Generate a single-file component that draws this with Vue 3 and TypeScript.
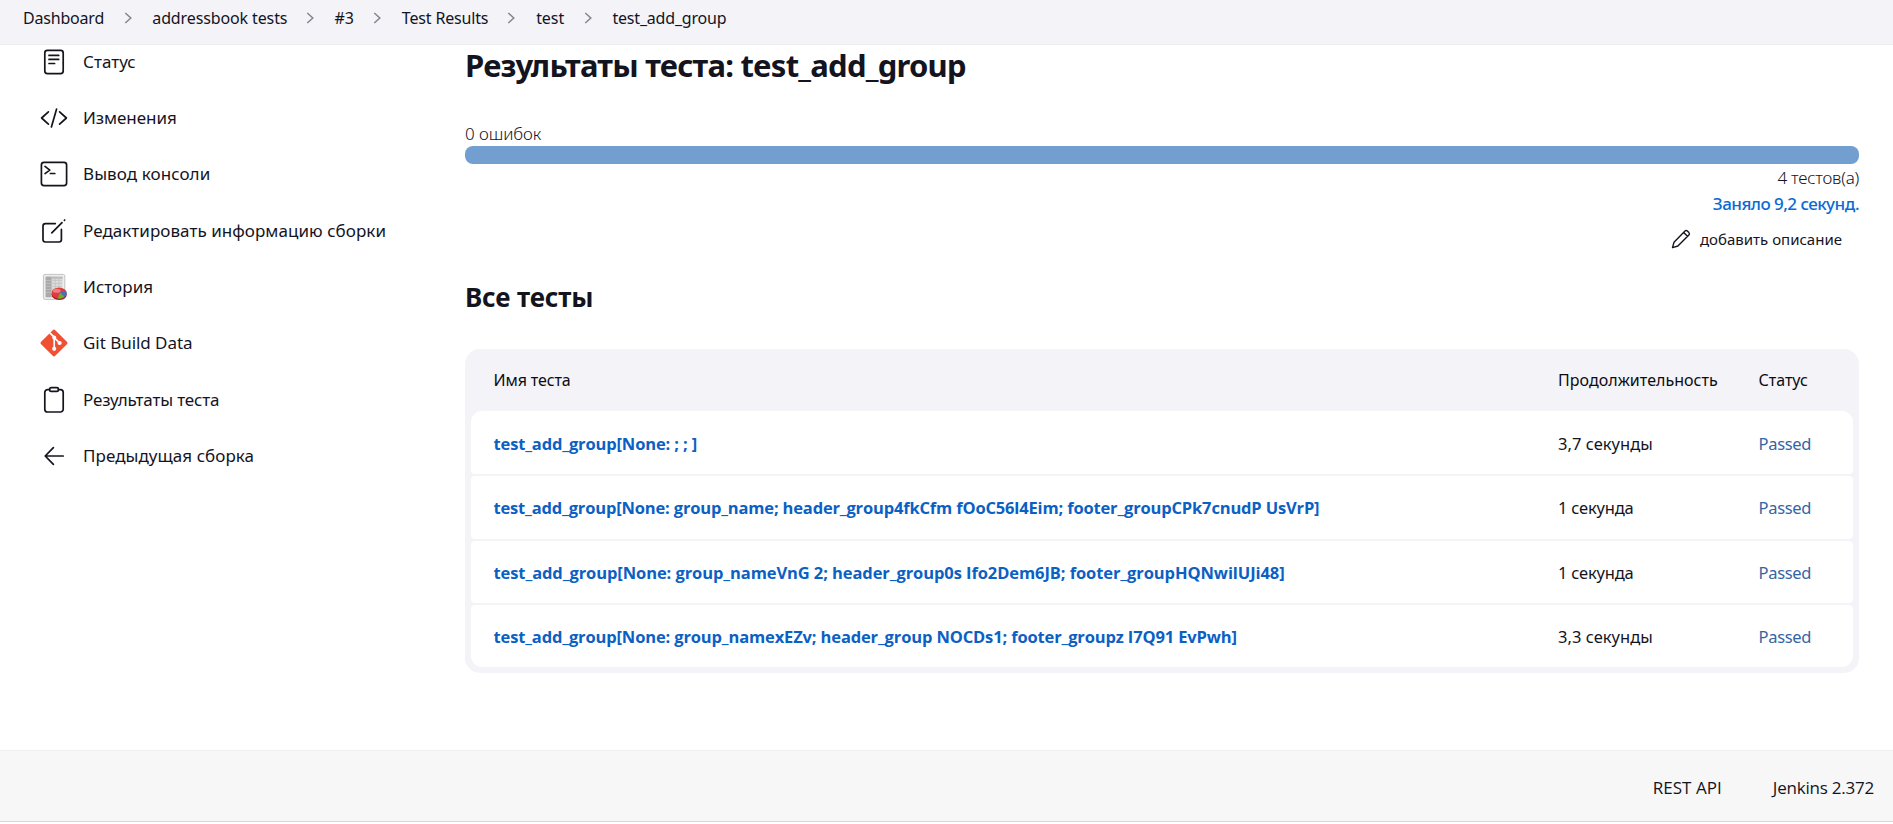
<script setup lang="ts">
interface Label { text: string; tracking: string }
interface Task extends Label { icon: string }
interface TestCase extends Label { duration: string; durationTracking: string; status: string }

const crumbs: Label[] = [
  { text: 'Dashboard', tracking: '-0.2px' },
  { text: 'addressbook tests', tracking: '-0.12px' },
  { text: '#3', tracking: '-0.24px' },
  { text: 'Test Results', tracking: '-0.17px' },
  { text: 'test', tracking: '-0.06px' },
  { text: 'test_add_group', tracking: '-0.19px' },
]

const tasks: Task[] = [
  { icon: 'status', text: 'Статус', tracking: '0.05px' },
  { icon: 'changes', text: 'Изменения', tracking: '-0.05px' },
  { icon: 'console', text: 'Вывод консоли', tracking: '0.08px' },
  { icon: 'edit', text: 'Редактировать информацию сборки', tracking: '0.05px' },
  { icon: 'history', text: 'История', tracking: '0.05px' },
  { icon: 'git', text: 'Git Build Data', tracking: '-0.04px' },
  { icon: 'clipboard', text: 'Результаты теста', tracking: '-0.17px' },
  { icon: 'back', text: 'Предыдущая сборка', tracking: '0.05px' },
]

const tests: TestCase[] = [
  { text: 'test_add_group[None: ; ; ]', tracking: '-0.14px', duration: '3,7 секунды', durationTracking: '0.03px', status: 'Passed' },
  { text: 'test_add_group[None: group_name; header_group4fkCfm fOoC56l4Eim; footer_groupCPk7cnudP UsVrP]', tracking: '-0.165px', duration: '1 секунда', durationTracking: '-0.2px', status: 'Passed' },
  { text: 'test_add_group[None: group_nameVnG 2; header_group0s Ifo2Dem6JB; footer_groupHQNwilUJi48]', tracking: '-0.085px', duration: '1 секунда', durationTracking: '-0.2px', status: 'Passed' },
  { text: 'test_add_group[None: group_namexEZv; header_group NOCDs1; footer_groupz I7Q91 EvPwh]', tracking: '-0.14px', duration: '3,3 секунды', durationTracking: '0.03px', status: 'Passed' },
]
</script>

<template>
  <div class="page">
    <nav class="crumbs">
      <template v-for="(c, i) in crumbs" :key="c.text">
        <svg v-if="i > 0" class="chevron" viewBox="0 0 8 12"><path d="M1.3 1 6.8 6 1.3 11" /></svg>
        <a :class="'crumb c' + i" :style="{ letterSpacing: c.tracking }">{{ c.text }}</a>
      </template>
    </nav>

    <div class="body">
      <aside class="side">
        <a v-for="t in tasks" :key="t.icon" class="task">
          <svg class="icon" viewBox="0 0 28 28">
            <g v-if="t.icon === 'status'" class="line">
              <rect x="4.8" y="2.3" width="18.4" height="23.4" rx="2.6" />
              <path d="M9 7.4h9.7M9 11.4h9.7M9 15.5h5.6" />
            </g>
            <g v-else-if="t.icon === 'changes'" class="line">
              <path d="M8.4 7.8 1.6 14l6.8 6.2M19.6 7.8l6.8 6.2-6.8 6.2M16.6 5 11.4 23" />
            </g>
            <g v-else-if="t.icon === 'console'" class="line">
              <rect x="1.4" y="2.4" width="25.2" height="23.2" rx="2.6" />
              <path d="M5 6.4l4.8 3.7L5 13.6M10.4 13.5h4.4" />
            </g>
            <g v-else-if="t.icon === 'edit'" class="line">
              <path d="M15.3 6.6H5.4a2.4 2.4 0 0 0-2.4 2.4v13.6A2.4 2.4 0 0 0 5.4 25h13.6a2.4 2.4 0 0 0 2.4-2.4V12.4M11.8 15.9 22 5.7M24.4 3.3l.3-.3" />
            </g>
            <g v-else-if="t.icon === 'history'">
              <rect x="3.4" y="1.4" width="21.4" height="25" rx="1.6" fill="#eeeeee" stroke="#bdbdbd" stroke-width=".9" />
              <path d="M5.6 3.6h17v20.6h-17z" fill="#dcdcdc" />
              <path d="M5.6 3.6h6v20.6h-6z" fill="#a9a9a9" />
              <path d="M11.6 3.6h11v2.2h-11z" fill="#bcbcbc" />
              <path d="M6 7.4h16M6 10.4h16M6 13.4h16M6 16.4h16M6 19.4h10M15.4 4v17M19 4v12" stroke="#c3c3c3" stroke-width=".8" />
              <ellipse cx="19.2" cy="21.5" rx="7.6" ry="5.4" fill="#a91d22" />
              <ellipse cx="19" cy="19.9" rx="7.4" ry="5.5" fill="#df3b3f" />
              <ellipse cx="16.6" cy="17.7" rx="4" ry="2" fill="#f07c7c" />
              <path d="M20 19.5 25.9 17.4Q28 21 24.6 24z" fill="#4b6fb8" />
              <path d="M20 19.5 24.6 24q-3.2 2.2-6.8 1.7z" fill="#65b32e" />
            </g>
            <g v-else-if="t.icon === 'git'">
              <rect x="4" y="4" width="20" height="20" rx="1.8" fill="#f05133" transform="rotate(45 14 14)" />
              <path d="M9.8 3.8 14.2 8.2v12M14.4 8.8l5.4 5.4" fill="none" stroke="#fff" stroke-width="1.7" />
              <circle cx="14.2" cy="8.6" r="2" fill="#fff" />
              <circle cx="14.2" cy="19.8" r="2.1" fill="#fff" />
              <circle cx="19.6" cy="14" r="2.1" fill="#fff" />
            </g>
            <g v-else-if="t.icon === 'clipboard'" class="line">
              <path d="M9.6 3.6H7.6A2.8 2.8 0 0 0 4.8 6.4v16.8A2.8 2.8 0 0 0 7.6 26h12.8a2.8 2.8 0 0 0 2.8-2.8V6.4a2.8 2.8 0 0 0-2.8-2.8h-2" />
              <rect x="9.6" y="1.6" width="8.8" height="3.8" rx="1.5" />
            </g>
            <g v-else class="line">
              <path d="M13.4 5.6 5.2 14l8.2 8.4M5.6 14h17.6" />
            </g>
          </svg>
          <span :style="{ letterSpacing: t.tracking }">{{ t.text }}</span>
        </a>
      </aside>

      <main class="main">
        <h1>Результаты теста: test_add_group</h1>
        <div class="failures">0 ошибок</div>
        <div class="bar"></div>
        <div class="total">4 тестов(а)</div>
        <div class="took"><a>Заняло 9,2 секунд.</a></div>
        <div class="describe">
          <svg class="pencil" viewBox="0 0 20 20"><path d="M1.5 18.6 3 13.2 14 2.1q1.2-1.1 2.4 0l1.5 1.5q1.1 1.2 0 2.4L6.9 17zM12.7 3.5l3.8 3.8" /></svg>
          <a>добавить описание</a>
        </div>
        <h2>Все тесты</h2>

        <div class="table">
          <div class="row head">
            <span class="h-name">Имя теста</span>
            <span class="h-duration">Продолжительность</span>
            <span>Статус</span>
          </div>
          <div v-for="t in tests" :key="t.text" class="row cells">
            <a class="name" :style="{ letterSpacing: t.tracking }">{{ t.text }}</a>
            <span :style="{ letterSpacing: t.durationTracking }">{{ t.duration }}</span>
            <span class="passed">{{ t.status }}</span>
          </div>
        </div>
      </main>
    </div>

    <footer class="footer">
      <a>REST API</a>
      <a class="version">Jenkins 2.372</a>
    </footer>
  </div>
</template>

<style>
body { background: #fff; }
</style>

<style scoped>
.page {
  display: flex;
  flex-direction: column;
  height: 824px;
  overflow: hidden;
  color: #14141f;
  font: 400 16px/24px "Noto Sans", "Open Sans", sans-serif;
  white-space: nowrap;
}
.crumbs {
  box-sizing: border-box;
  flex: none;
  display: flex;
  align-items: center;
  height: 45px;
  padding: 0 24px 9px 23px;
  background: #f3f3f8;
  border-bottom: 1px solid #eeeef1;
}
.crumb { flex: none; }
.c0 { width: 81px; }
.c1 { width: 134px; }
.c2 { width: 19px; }
.c3 { width: 86px; }
.c4 { width: 28px; }
.chevron {
  flex: none;
  width: 8px;
  height: 12px;
  margin: 0 20.7px 0 19.6px;
  fill: none;
  stroke: #85858f;
  stroke-width: 1.5;
}
.body {
  flex: none;
  display: flex;
  height: 705px;
}
.side {
  flex: none;
  width: 465px;
}
.task {
  display: flex;
  align-items: center;
  height: 56.3px;
  padding-left: 40px;
  font-size: 17px;
}
.task:first-child { margin-top: -11.3px; }
.task span { margin-left: 15px; }
.icon { flex: none; width: 28px; height: 28px; }
.line {
  fill: none;
  stroke: #14141f;
  stroke-width: 1.7;
  stroke-linecap: round;
  stroke-linejoin: round;
}
.main {
  display: flex;
  flex-direction: column;
  width: 1394px;
}
h1 {
  margin: 0;
  font-size: 31px;
  font-weight: 700;
  line-height: 40px;
  letter-spacing: -0.77px;
}
.failures {
  margin-top: 37px;
  font-size: 17px;
  font-weight: 300;
  line-height: 24px;
  letter-spacing: -0.08px;
}
.bar {
  height: 18px;
  background: #729fcf;
  border-radius: 8px;
}
.total {
  margin-top: 2px;
  text-align: right;
  font-size: 17px;
  font-weight: 300;
  line-height: 24px;
  letter-spacing: -0.22px;
}
.took {
  margin-top: 2px;
  text-align: right;
  font-size: 17px;
  font-weight: 500;
  line-height: 24px;
  letter-spacing: -0.54px;
  color: #0b6bd4;
}
.describe {
  display: flex;
  align-items: center;
  justify-content: flex-end;
  height: 32px;
  margin-top: 7px;
  padding-right: 17px;
  font-size: 15px;
}
.pencil {
  width: 20px;
  height: 20px;
  margin-right: 9px;
  fill: none;
  stroke: #14141f;
  stroke-width: 1.4;
  stroke-linejoin: round;
}
h2 {
  margin: 22px 0 0;
  font-size: 26px;
  font-weight: 700;
  line-height: 40px;
  letter-spacing: -0.14px;
}
.table {
  margin-top: 32px;
  padding: 0 6px 6px;
  background: #f3f3f8;
  border-radius: 15px;
}
.row {
  display: grid;
  grid-template-columns: 1064.5px 200.5px 1fr;
  align-items: center;
  padding-left: 22.5px;
}
.head { height: 62.4px; color: #0c0c12; }
.h-name { letter-spacing: -0.12px; }
.h-duration { letter-spacing: 0.04px; }
.cells {
  box-sizing: border-box;
  height: 62.7px;
  margin-bottom: 2px;
  padding-top: 2px;
  background: #fff;
  border-radius: 4px;
  font-size: 16.5px;
}
.cells:nth-child(2) { border-radius: 11px 11px 4px 4px; }
.cells:last-child {
  height: 62px;
  margin-bottom: 0;
  border-radius: 4px 4px 11px 11px;
}
.name {
  font-family: "Open Sans", sans-serif;
  font-size: 16.5px;
  font-weight: 700;
  color: #0b60c4;
}
.passed { color: #3465a4; letter-spacing: -0.3px; }
.footer {
  box-sizing: border-box;
  flex: none;
  display: flex;
  align-items: center;
  justify-content: flex-end;
  height: 72px;
  padding: 3px 19px 0 0;
  background: #f7f7f7;
  border-top: 1px solid #efefef;
  border-bottom: 1px solid #d8d8d8;
  font-family: "Open Sans", sans-serif;
  font-size: 17px;
  letter-spacing: 0.05px;
}
.version { margin-left: 51px; letter-spacing: -0.22px; }
</style>
